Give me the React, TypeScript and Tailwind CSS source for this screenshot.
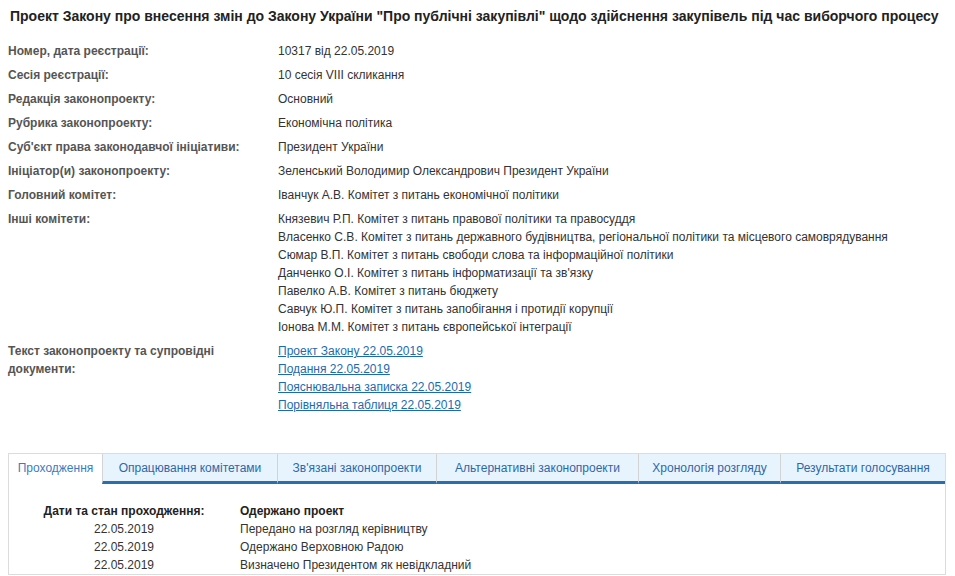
import React from "react";

const rows: { label: string; values: string[] }[] = [
  { label: "Номер, дата реєстрації:", values: ["10317 від 22.05.2019"] },
  { label: "Сесія реєстрації:", values: ["10 сесія VIII скликання"] },
  { label: "Редакція законопроекту:", values: ["Основний"] },
  { label: "Рубрика законопроекту:", values: ["Економічна політика"] },
  { label: "Суб'єкт права законодавчої ініціативи:", values: ["Президент України"] },
  { label: "Ініціатор(и) законопроекту:", values: ["Зеленський Володимир Олександрович Президент України"] },
  { label: "Головний комітет:", values: ["Іванчук А.В. Комітет з питань економічної політики"] },
  {
    label: "Інші комітети:",
    values: [
      "Князевич Р.П. Комітет з питань правової політики та правосуддя",
      "Власенко С.В. Комітет з питань державного будівництва, регіональної політики та місцевого самоврядування",
      "Сюмар В.П. Комітет з питань свободи слова та інформаційної політики",
      "Данченко О.І. Комітет з питань інформатизації та зв'язку",
      "Павелко А.В. Комітет з питань бюджету",
      "Савчук Ю.П. Комітет з питань запобігання і протидії корупції",
      "Іонова М.М. Комітет з питань європейської інтеграції",
    ],
  },
];

const links = [
  "Проект Закону 22.05.2019",
  "Подання 22.05.2019",
  "Пояснювальна записка 22.05.2019",
  "Порівняльна таблиця 22.05.2019",
];

const tabs = [
  { name: "Проходження", w: "w-[93px]" },
  { name: "Опрацювання комітетами", w: "w-[175px]" },
  { name: "Зв'язані законопроекти", w: "w-[159px]" },
  { name: "Альтернативні законопроекти", w: "w-[202px]" },
  { name: "Хронологія розгляду", w: "w-[142px]" },
  { name: "Результати голосування", w: "flex-1" },
];

const stages = [
  { date: "", text: "Одержано проект" },
  { date: "22.05.2019", text: "Передано на розгляд керівництву" },
  { date: "22.05.2019", text: "Одержано Верховною Радою" },
  { date: "22.05.2019", text: "Визначено Президентом як невідкладний" },
];

export default function App() {
  return (
    <div className="w-[955px] h-[576px] overflow-hidden bg-white px-2 pt-[7px] text-[12px] leading-[18px] text-[#333] [font-family:'Liberation_Sans',Arial,sans-serif]">
      <h1 className="pl-[2px] text-[14px] font-bold leading-[18px] text-[#222]">
        Проект Закону про внесення змін до Закону України "Про публічні закупівлі" щодо здійснення закупівель під час виборчого процесу
      </h1>
      <div className="mt-[17px] flex flex-col gap-[6px]">
        {rows.map((r) => (
          <div key={r.label} className="flex">
            <div className="w-[270px] shrink-0 font-bold text-[#555]">{r.label}</div>
            <div className="flex flex-col">
              {r.values.map((v) => (
                <div key={v}>{v}</div>
              ))}
            </div>
          </div>
        ))}
        <div className="flex">
          <div className="w-[270px] shrink-0 pr-[40px] font-bold text-[#555]">
            Текст законопроекту та супровідні документи:
          </div>
          <div className="flex flex-col">
            {links.map((l) => (
              <a key={l} href="#" className="text-[#1c6bb0] underline">
                {l}
              </a>
            ))}
          </div>
        </div>
      </div>
      <div className="mt-[39px] w-[938px] border border-[#dcdcdc]">
        <div className="flex h-[30px]">
          {tabs.map((t, i) => (
            <div
              key={t.name}
              className={
                i === 0
                  ? `${t.w} flex items-center justify-center bg-white text-[#3b7bbf] border-b-2 border-white`
                  : `${t.w} flex items-center justify-center bg-[#e8f4fd] text-[#2c68a8] border-l border-[#d3d3d3] border-b-[3px] border-b-[#2a6eae]`
              }
            >
              {t.name}
            </div>
          ))}
        </div>
        <div className="pt-[18px] pb-0">
          {stages.map((s, i) => (
            <div key={i} className="flex">
              <div className={i === 0 ? "w-[200px] ml-[15px] text-center font-bold text-[#222]" : "w-[200px] ml-[15px] text-center"}>
                {i === 0 ? "Дати та стан проходження:" : s.date}
              </div>
              <div className={i === 0 ? "ml-[16px] font-bold text-[#222]" : "ml-[16px]"}>{s.text}</div>
            </div>
          ))}
        </div>
      </div>
    </div>
  );
}
